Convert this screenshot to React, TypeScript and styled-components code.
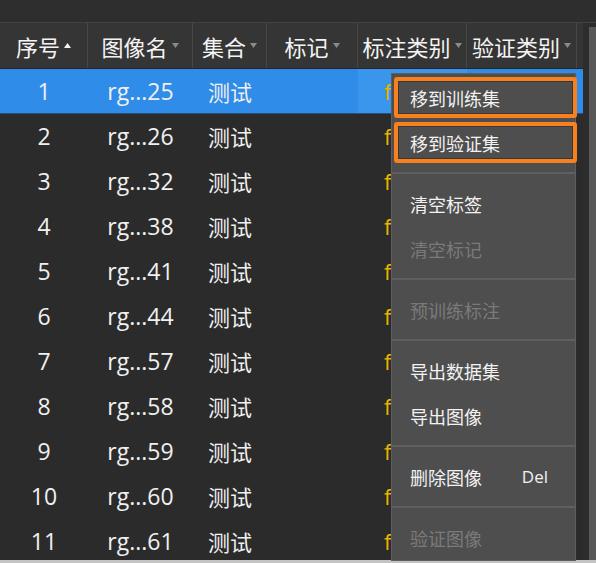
import React from "react";
import styled, { createGlobalStyle } from "styled-components";

const Global = createGlobalStyle`
  html, body { margin: 0; padding: 0; background: #2b2b2b; overflow: hidden; }
  * { box-sizing: border-box; }
`;

const Page = styled.div`
  position: relative;
  width: 596px;
  height: 563px;
  display: flex;
  flex-direction: column;
  background: #2b2b2b;
  overflow: hidden;
  font-family: "Open Sans", "Noto Sans CJK SC", sans-serif;
`;

const TopStrip = styled.div`
  height: 23px;
  flex: none;
  background: #2e2e2e;
  border-bottom: 1px solid #434343;
`;

const Body = styled.div`
  flex: 1;
  display: flex;
  min-height: 0;
  overflow: hidden;
`;

const Table = styled.div`
  width: 583px;
  flex: none;
  display: flex;
  flex-direction: column;
`;

const Gutter = styled.div`
  width: 6px;
  flex: none;
  background: #2d2d2d;
`;

const ScrollTrack = styled.div`
  width: 7px;
  flex: none;
  margin-top: 4px;
  background: #585858;
`;

const BottomEdge = styled.div`
  height: 3px;
  flex: none;
  background: #c4c4c4;
`;

const HeaderRow = styled.div`
  display: flex;
  height: 46px;
  flex: none;
  background: #353535;
  border-bottom: 1px solid #262626;
`;

const HeaderCell = styled.div<{ $w: number; $last?: boolean }>`
  width: ${(p) => p.$w}px;
  flex: none;
  display: flex;
  align-items: center;
  justify-content: center;
  gap: 4px;
  border-right: ${(p) => (p.$last ? "none" : "1px solid #474747")};
  color: #f4f4f4;
  font-family: "Noto Sans CJK SC", sans-serif;
  font-size: 22px;
  white-space: nowrap;
`;

const Row = styled.div<{ $selected?: boolean }>`
  display: flex;
  height: 45px;
  flex: none;
  background: ${(p) => (p.$selected ? "#2f8ce8" : "#2b2b2b")};
  border-bottom: 1px solid ${(p) => (p.$selected ? "#24527f" : "#2b2b2b")};
`;

const Cell = styled.div<{ $w: number; $current?: boolean; $tone?: "label" | "latin" }>`
  width: ${(p) => p.$w}px;
  flex: none;
  display: flex;
  align-items: center;
  justify-content: center;
  font-size: ${(p) => (p.$tone === "latin" ? 23 : 22)}px;
  color: ${(p) => (p.$tone === "label" ? "#e9b300" : "#f0f0f0")};
  background: ${(p) => (p.$current ? "#3a95ec" : "transparent")};
  white-space: nowrap;
  overflow: hidden;
`;

const Menu = styled.div`
  position: absolute;
  left: 391px;
  top: 73px;
  width: 185px;
  padding-top: 1px;
  background: #4e4e4e;
  border: 1px solid #5e5e5e;
  display: flex;
  flex-direction: column;
  font-family: "Noto Sans CJK SC", sans-serif;
`;

const MenuItem = styled.div<{ $disabled?: boolean; $marked?: boolean }>`
  position: relative;
  height: 45px;
  flex: none;
  display: flex;
  align-items: center;
  justify-content: space-between;
  padding: 0 27px 0 18px;
  font-size: 18px;
  color: ${(p) => (p.$disabled ? "#7a7a7a" : "#f2f2f2")};
  ${(p) =>
    p.$marked
      ? `
    &::after {
      content: "";
      position: absolute;
      left: 2px;
      right: -2px;
      top: 2px;
      bottom: 2px;
      border: 4px solid #f8801f;
      border-radius: 3px;
      box-shadow: inset 0 0 0 1px #383838;
      pointer-events: none;
    }
  `
      : ""}
`;

const Shortcut = styled.span`
  font-family: "Open Sans", sans-serif;
  font-size: 17px;
  color: #f2f2f2;
`;

const Separator = styled.div`
  height: 16px;
  flex: none;
  display: flex;
  align-items: center;
  &::before {
    content: "";
    display: block;
    width: 100%;
    height: 2px;
    background: #5f5f5f;
  }
`;

const SortIcon = ({ up }: { up?: boolean }) => (
  <svg width="7" height="5" viewBox="0 0 7 5">
    {up ? (
      <path d="M0 5 L3.5 0 L7 5 Z" fill="#f2f2f2" />
    ) : (
      <path d="M0 0 L7 0 L3.5 5 Z" fill="#8a8a8a" />
    )}
  </svg>
);

const widths = [88, 105, 74, 91, 109, 110, 6];
const headers = ["序号", "图像名", "集合", "标记", "标注类别", "验证类别"];
const names = ["25", "26", "32", "38", "41", "44", "57", "58", "59", "60", "61"];

export default function App() {
  return (
    <>
      <Global />
      <Page>
        <TopStrip />
        <Body>
          <Table>
            <HeaderRow>
              {headers.map((h, i) => (
                <HeaderCell key={h} $w={widths[i]}>
                  {h}
                  <SortIcon up={i === 0} />
                </HeaderCell>
              ))}
              <HeaderCell $w={widths[6]} $last />
            </HeaderRow>
            {names.map((n, i) => (
              <Row key={n} $selected={i === 0}>
                <Cell $w={widths[0]} $tone="latin">{i + 1}</Cell>
                <Cell $w={widths[1]} $tone="latin">rg...{n}</Cell>
                <Cell $w={widths[2]}>测试</Cell>
                <Cell $w={widths[3]} />
                <Cell $w={widths[4]} $tone="label" $current={i === 0}>
                  faults
                </Cell>
                <Cell $w={widths[5]} />
                <Cell $w={widths[6]} />
              </Row>
            ))}
          </Table>
          <Gutter />
          <ScrollTrack />
        </Body>
        <BottomEdge />
        <Menu>
          <MenuItem $marked>移到训练集</MenuItem>
          <MenuItem $marked>移到验证集</MenuItem>
          <Separator />
          <MenuItem>清空标签</MenuItem>
          <MenuItem $disabled>清空标记</MenuItem>
          <Separator />
          <MenuItem $disabled>预训练标注</MenuItem>
          <Separator />
          <MenuItem>导出数据集</MenuItem>
          <MenuItem>导出图像</MenuItem>
          <Separator />
          <MenuItem>
            删除图像<Shortcut>Del</Shortcut>
          </MenuItem>
          <Separator />
          <MenuItem $disabled>验证图像</MenuItem>
        </Menu>
      </Page>
    </>
  );
}
